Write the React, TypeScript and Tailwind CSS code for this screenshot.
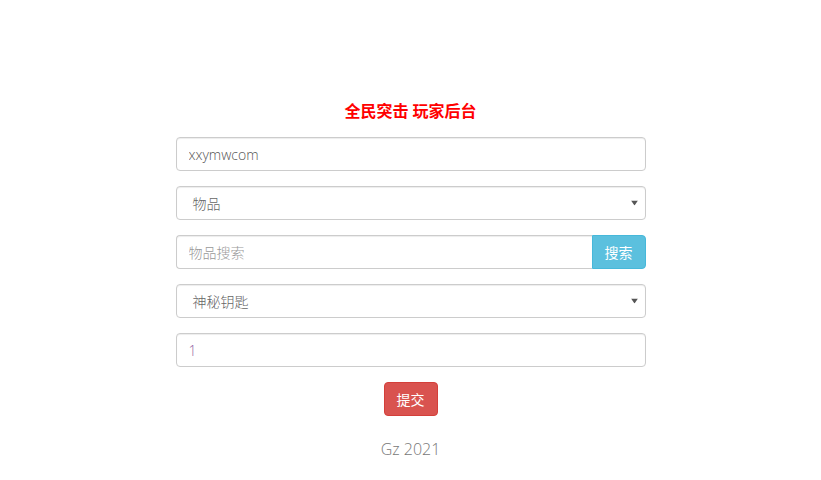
import React from "react";

const font = { fontFamily: '"Open Sans", "Noto Sans CJK SC", sans-serif' };

function Caret() {
  return (
    <svg className="absolute right-[7px] top-1/2 -translate-y-1/2" width="7" height="5" viewBox="0 0 7 5">
      <path d="M0 0 L7 0 L3.5 5 Z" fill="#555" />
    </svg>
  );
}

export default function App() {
  return (
    <div className="min-h-[480px] w-full bg-white flex justify-center" style={font}>
      <div className="w-[470px] flex flex-col pt-[98px]">
        <h1 className="text-center text-[16px] font-bold leading-[26px] text-[#ff0000] mb-[13px]">全民突击 玩家后台</h1>
        <div className="flex flex-col gap-[15px]">
          <input
            className="h-[34px] w-full rounded-[4px] border border-[#ccc] px-[12px] text-[14px] font-light text-[#555] placeholder:text-[#999] shadow-[inset_0_1px_1px_rgba(0,0,0,0.075)] outline-none"
            defaultValue="xxymwcom"
          />
          <div className="relative h-[34px] w-full rounded-[4px] border border-[#ccc] shadow-[inset_0_1px_1px_rgba(0,0,0,0.075)] flex items-center pl-[16px] text-[14px] font-light text-[#666]">
            物品
            <Caret />
          </div>
          <div className="flex h-[34px] w-full">
            <input
              className="h-[34px] flex-1 min-w-0 rounded-l-[4px] border border-r-0 border-[#ccc] px-[12px] text-[14px] font-light text-[#555] placeholder:text-[#999] shadow-[inset_0_1px_1px_rgba(0,0,0,0.075)] outline-none"
              placeholder="物品搜索"
            />
            <button className="h-[34px] w-[54px] rounded-r-[4px] border border-[#46b8da] bg-[#5bc0de] text-[14px] text-white">搜索</button>
          </div>
          <div className="relative h-[34px] w-full rounded-[4px] border border-[#ccc] shadow-[inset_0_1px_1px_rgba(0,0,0,0.075)] flex items-center pl-[16px] text-[14px] font-light text-[#666]">
            神秘钥匙
            <Caret />
          </div>
          <input
            className="h-[34px] w-full rounded-[4px] border border-[#ccc] px-[12px] text-[14px] font-light text-[#8e5ea2] shadow-[inset_0_1px_1px_rgba(0,0,0,0.075)] outline-none"
            defaultValue="1"
          />
        </div>
        <div className="flex justify-center mt-[15px]">
          <button className="h-[34px] w-[54px] rounded-[4px] border border-[#d43f3a] bg-[#d9534f] text-[14px] text-white">提交</button>
        </div>
        <p className="text-center text-[16px] font-light text-[#777] mt-[22px] leading-[22px]">Gz 2021</p>
      </div>
    </div>
  );
}
